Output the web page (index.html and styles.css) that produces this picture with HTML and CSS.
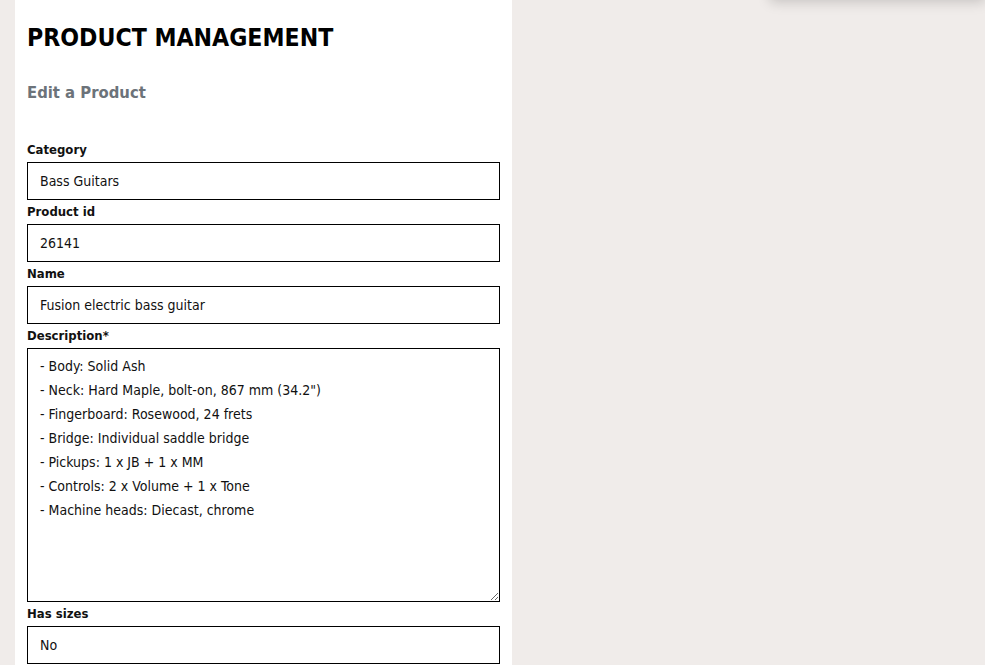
FILE: index.html
```html
<!DOCTYPE html>
<html>
<head>
<meta charset="utf-8">
<link rel="stylesheet" href="styles.css">
</head>
<body>
<div class="page">
  <main class="panel">
    <h1 class="title">PRODUCT MANAGEMENT</h1>
    <h2 class="subtitle">Edit a Product</h2>
    <form class="form">
      <label class="label">Category</label>
      <input class="field" type="text" value="Bass Guitars">
      <label class="label">Product id</label>
      <input class="field" type="text" value="26141">
      <label class="label">Name</label>
      <input class="field" type="text" value="Fusion electric bass guitar">
      <label class="label">Description*</label>
      <textarea class="field area">- Body: Solid Ash
- Neck: Hard Maple, bolt-on, 867 mm (34.2")
- Fingerboard: Rosewood, 24 frets
- Bridge: Individual saddle bridge
- Pickups: 1 x JB + 1 x MM
- Controls: 2 x Volume + 1 x Tone
- Machine heads: Diecast, chrome</textarea>
      <label class="label">Has sizes</label>
      <input class="field" type="text" value="No">
    </form>
  </main>
  <div class="menu-shadow"></div>
</div>
</body>
</html>
```
FILE: styles.css
```css
html, body {
  margin: 0;
  padding: 0;
  background: #f0ecea;
  height: 100%;
  overflow: hidden;
}
body {
  font-family: "DejaVu Sans Condensed", "DejaVu Sans", sans-serif;
  font-stretch: condensed;
  color: #111;
}
.page {
  position: relative;
  display: flex;
  padding-left: 15px;
  height: 665px;
}
.panel {
  width: 473px;
  background: #fff;
  padding: 0 12px;
  height: 100%;
}
.title {
  margin: 0;
  padding-top: 20px;
  font-size: 24.6px;
  font-weight: 700;
  line-height: 36px;
  color: #000;
}
.subtitle {
  margin: 0;
  padding-top: 25px;
  font-size: 16.5px;
  font-weight: 700;
  line-height: 24px;
  color: #6c737a;
}
.form {
  display: flex;
  flex-direction: column;
  padding-top: 33px;
}
.label {
  font-size: 13px;
  font-weight: 700;
  line-height: 24px;
  height: 24px;
  color: #111;
}
.field {
  box-sizing: border-box;
  width: 473px;
  height: 38px;
  margin: 0;
  border: 1px solid #000;
  border-radius: 0;
  padding: 0 12px;
  font-family: inherit;
  font-stretch: condensed;
  font-size: 14px;
  font-weight: 500;
  color: #111;
  background: #fff;
  outline: none;
}
.area {
  height: 254px;
  padding: 5px 12px;
  line-height: 24px;
  resize: vertical;
}
.menu-shadow {
  position: absolute;
  top: -40px;
  right: 0;
  width: 215px;
  height: 40px;
  background: #f0ecea;
  box-shadow: 0 2px 12px rgba(0,0,0,0.18);
}
```
